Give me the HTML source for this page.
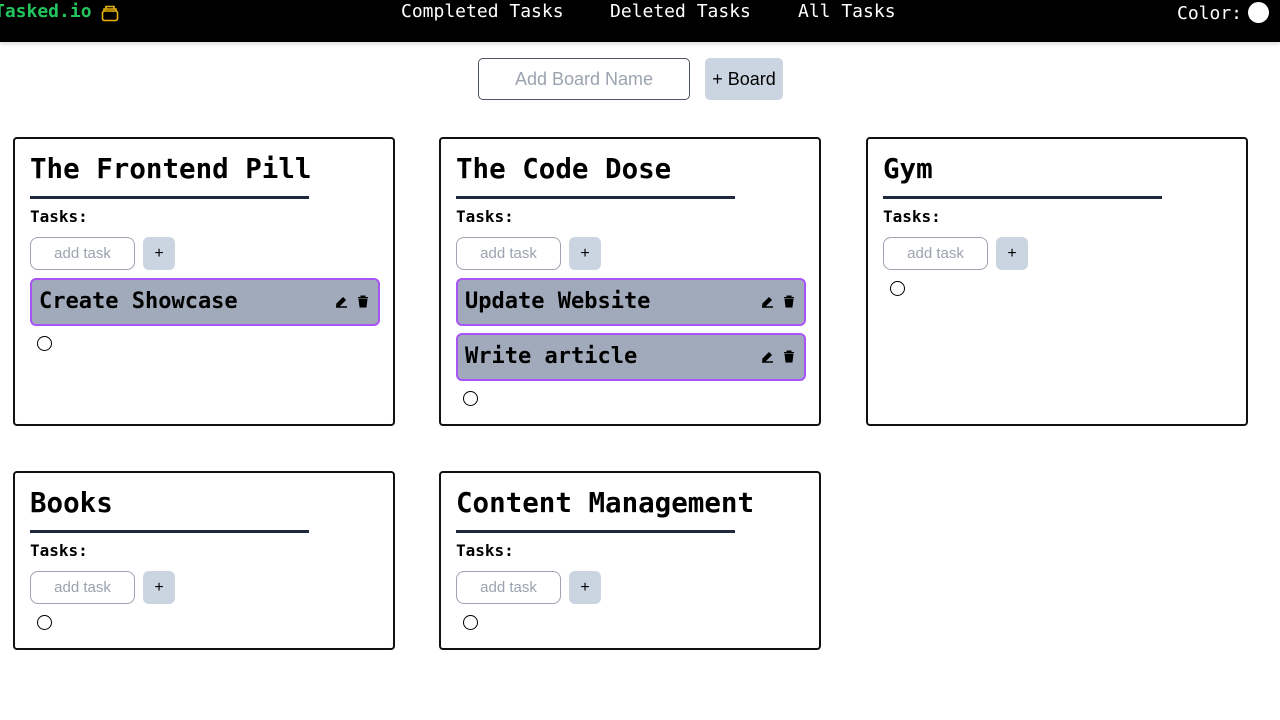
<!DOCTYPE html>
<html><head><style>
*{box-sizing:border-box;margin:0;padding:0}
body{width:1280px;height:720px;background:#fff;position:relative;overflow:hidden;font-family:"DejaVu Sans Mono","Liberation Mono",monospace}
.nav{position:absolute;left:0;top:0;width:1280px;height:42px;background:#000;box-shadow:0 2px 4px rgba(0,0,0,.15)}
.nav span{position:absolute;top:1px;color:#fff;font-size:18px;line-height:22px}
.logo{color:#22c55e!important;font-weight:bold}
.inp{position:absolute;border:1px solid #4b5563;border-radius:5px;color:#9ca3af;font-family:"Liberation Sans",sans-serif;text-align:center}
.btn{position:absolute;background:#cbd5e1;border-radius:5px;font-family:"Liberation Sans",sans-serif;text-align:center;color:#000}
.card{position:absolute;border:2px solid #111;border-radius:4px;width:382px}
.card h2{position:absolute;left:15px;top:13px;font-size:27.5px;line-height:34px;font-weight:bold}
.card .ul{position:absolute;left:15px;top:57px;width:279px;height:3px;background:#1e293b}
.card .tl{position:absolute;left:15px;top:68px;font-size:16px;font-weight:bold;line-height:20px}
.card .inp{left:15px;top:98px;width:105px;height:33px;line-height:31px;font-size:15px;border-color:#9ca3af;border-radius:8px}
.card .btn{left:128px;top:98px;width:32px;height:33px;line-height:33px;font-size:16px;border-radius:6px}
.task{position:absolute;left:15px;width:350px;height:48px;background:#a1aaba;border:2px solid #a855f7;border-radius:6px}
.task b{position:absolute;left:7px;top:9px;font-size:22px;line-height:26px}
.task svg{position:absolute;top:15px}
.circ{position:absolute;left:22px;width:15px;height:15px;border:1.5px solid #000;border-radius:50%}
</style></head><body>
<div class="nav">
<span class="logo" style="left:-6px">Tasked.io</span>
<svg style="position:absolute;left:101px;top:4px" width="18" height="18" viewBox="0 0 18 18" fill="none" stroke="#eab308" stroke-width="1.6"><rect x="1.5" y="7" width="15" height="9.5" rx="2"/><path d="M3 7V5h12v2M5 5V2.5h8V5"/></svg>
<span style="left:401px">Completed Tasks</span>
<span style="left:610px">Deleted Tasks</span>
<span style="left:798px">All Tasks</span>
<span style="left:1177px;top:3px">Color:</span>
<div style="position:absolute;left:1248px;top:2px;width:21px;height:21px;border-radius:50%;background:#fff"></div>
</div>
<div class="inp" style="left:478px;top:58px;width:212px;height:42px;line-height:40px;font-size:18px">Add Board Name</div>
<div class="btn" style="left:705px;top:58px;width:78px;height:42px;line-height:42px;font-size:18px">+ Board</div>

<div class="card" style="left:13px;top:137px;height:289px">
<h2>The Frontend Pill</h2><div class="ul"></div><div class="tl">Tasks:</div>
<div class="inp">add task</div><div class="btn">+</div>
<div class="task" style="top:139px"><b>Create Showcase</b>
<svg style="left:303px" width="13" height="13" viewBox="0 0 13 13"><path d="M2 9l6-6 2 2-6 6H2z M1 12h11" stroke="#000" stroke-width="1.5" fill="#000"/></svg>
<svg style="left:325px" width="12" height="13" viewBox="0 0 12 13"><path d="M1 2.5h10M4 2.5V1h4v1.5M2 4h8l-1 8H3z" fill="#000" stroke="#000"/></svg></div>
<div class="circ" style="top:197px"></div>
</div>

<div class="card" style="left:439px;top:137px;height:289px">
<h2>The Code Dose</h2><div class="ul"></div><div class="tl">Tasks:</div>
<div class="inp">add task</div><div class="btn">+</div>
<div class="task" style="top:139px"><b>Update Website</b>
<svg style="left:303px" width="13" height="13" viewBox="0 0 13 13"><path d="M2 9l6-6 2 2-6 6H2z M1 12h11" stroke="#000" stroke-width="1.5" fill="#000"/></svg>
<svg style="left:325px" width="12" height="13" viewBox="0 0 12 13"><path d="M1 2.5h10M4 2.5V1h4v1.5M2 4h8l-1 8H3z" fill="#000" stroke="#000"/></svg></div>
<div class="task" style="top:194px"><b>Write article</b>
<svg style="left:303px" width="13" height="13" viewBox="0 0 13 13"><path d="M2 9l6-6 2 2-6 6H2z M1 12h11" stroke="#000" stroke-width="1.5" fill="#000"/></svg>
<svg style="left:325px" width="12" height="13" viewBox="0 0 12 13"><path d="M1 2.5h10M4 2.5V1h4v1.5M2 4h8l-1 8H3z" fill="#000" stroke="#000"/></svg></div>
<div class="circ" style="top:252px"></div>
</div>

<div class="card" style="left:866px;top:137px;height:289px">
<h2>Gym</h2><div class="ul"></div><div class="tl">Tasks:</div>
<div class="inp">add task</div><div class="btn">+</div>
<div class="circ" style="top:142px"></div>
</div>

<div class="card" style="left:13px;top:471px;height:179px">
<h2>Books</h2><div class="ul"></div><div class="tl">Tasks:</div>
<div class="inp">add task</div><div class="btn">+</div>
<div class="circ" style="top:142px"></div>
</div>

<div class="card" style="left:439px;top:471px;height:179px">
<h2>Content Management</h2><div class="ul"></div><div class="tl">Tasks:</div>
<div class="inp">add task</div><div class="btn">+</div>
<div class="circ" style="top:142px"></div>
</div>
</body></html>
